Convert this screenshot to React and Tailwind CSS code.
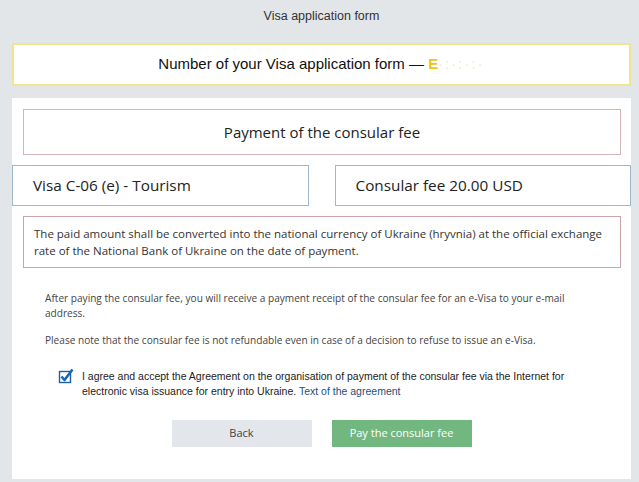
import React from "react";

export default function App() {
  return (
    <div className="min-h-[482px] bg-[#e2e6e9] pt-[8px] pb-[4px] pl-[12px] pr-[8px] font-['Liberation_Sans',Arial,sans-serif]">
      {/* Title */}
      <div className="text-center text-[12.5px] leading-[16px] text-[#333]">Visa application form</div>

      {/* Application number */}
      <div className="mt-[19px] h-[43px] flex items-center justify-center bg-white border-2 border-[#f1e594] text-[15px] text-[#111]">
        <span>
          Number of your Visa application form — <span className="text-[#f0c419] font-bold">E</span>
          <span className="text-[#f6ebb4] tracking-[2px]">·:·:·:·</span>
        </span>
      </div>

      {/* Main panel */}
      <div className="mt-[12px] bg-white pt-[11px] pb-[32px] font-['Open_Sans','Noto_Sans',sans-serif]">
        <div className="mx-[11px] mr-[10px] h-[46px] flex items-center justify-center border border-[#d6b4b8] text-[15px] text-[#222]">
          Payment of the consular fee
        </div>

        <div className="mt-[10px] flex gap-[26px]">
          <div className="flex-1 h-[41px] flex items-center pl-[20px] border border-[#9db8cc] text-[15.3px] text-[#222]">
            Visa C-06 (e) - Tourism
          </div>
          <div className="flex-1 h-[41px] flex items-center pl-[20px] border border-[#9db8cc] text-[15.3px] text-[#222]">
            Consular fee 20.00 USD
          </div>
        </div>

        <div className="mt-[10px] mx-[11px] mr-[10px] h-[52px] flex items-center px-[10px] border border-[#c9a3a9] text-[11.5px] leading-[17px] text-[#333]">
          The paid amount shall be converted into the national currency of Ukraine (hryvnia) at the official exchange rate of the National Bank of Ukraine on the date of payment.
        </div>

        <div className="mt-[23px] pl-[33px] pr-[40px] text-[10.1px] leading-[15px] text-[#444]">
          <p>After paying the consular fee, you will receive a payment receipt of the consular fee for an e-Visa to your e-mail address.</p>
          <p className="mt-[12px]">Please note that the consular fee is not refundable even in case of a decision to refuse to issue an e-Visa.</p>
        </div>

        <div className="mt-[21px] pl-[46px] pr-[50px] flex items-start gap-[8px] font-['Liberation_Sans',Arial,sans-serif]">
          <svg width="16" height="16" viewBox="0 0 16 16" className="mt-[-1px] shrink-0">
            <rect x="1.5" y="3.5" width="11" height="11" fill="#fff" stroke="#1f5fa8" strokeWidth="1.4" />
            <path d="M3.5 8.5 L6.5 12 L14.5 1.5" fill="none" stroke="#1668b4" strokeWidth="2.6" strokeLinejoin="round" />
          </svg>
          <p className="text-[10.5px] leading-[15px] text-[#222]">
            I agree and accept the Agreement on the organisation of payment of the consular fee via the Internet for electronic visa issuance for entry into Ukraine.{" "}
            <span className="text-[#1d4f7e]">Text of the agreement</span>
          </p>
        </div>

        <div className="mt-[21px] flex justify-center gap-[20px]">
          <button className="w-[140px] h-[27px] bg-[#e3e6ea] text-[11px] text-[#444]">Back</button>
          <button className="w-[140px] h-[27px] bg-[#72b77f] text-[11px] text-white">Pay the consular fee</button>
        </div>
      </div>
    </div>
  );
}
